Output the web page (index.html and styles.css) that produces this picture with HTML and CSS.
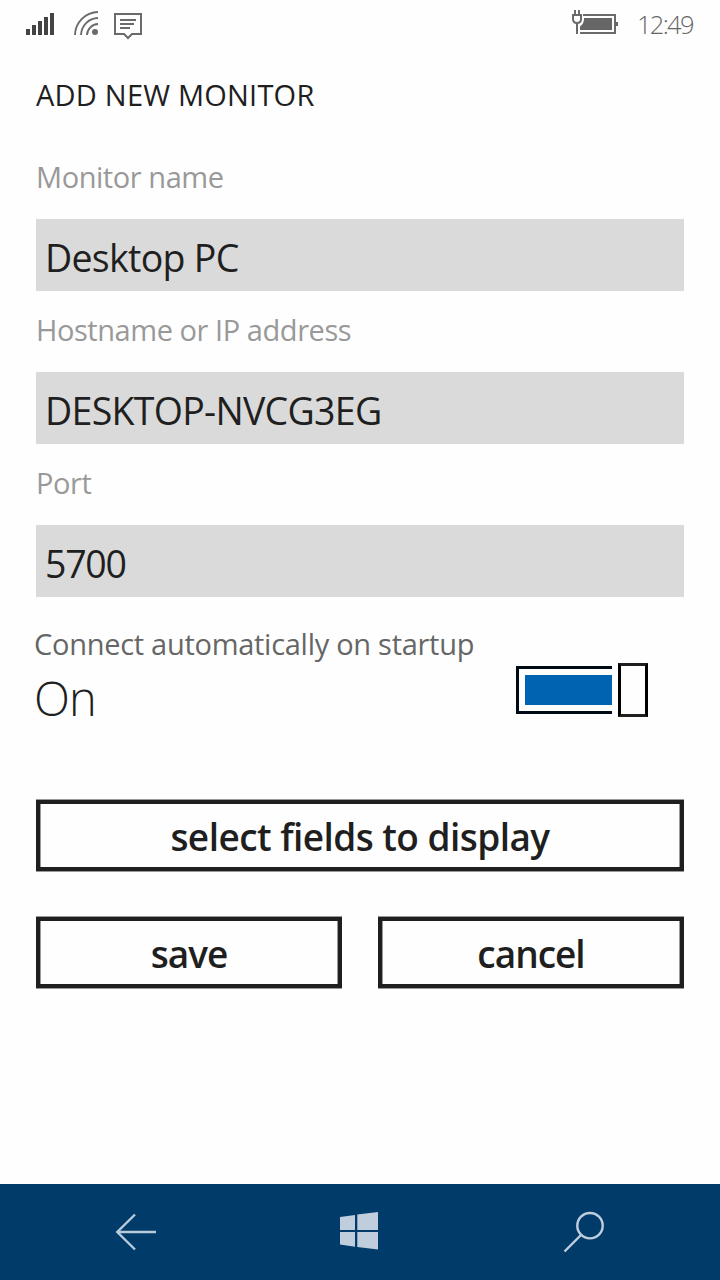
FILE: index.html
```html
<!DOCTYPE html>
<html lang="en">
<head>
    <meta charset="UTF-8">
    <meta name="viewport" content="width=device-width, initial-scale=1.0">
    <title>Add new monitor</title>
    <link rel="stylesheet" href="styles.css">
</head>
<body>
    <div class="phone">
        <div class="status-bar">
            <svg class="status-left" width="160" height="48" viewBox="0 0 160 48">
                <g fill="#444">
                    <rect x="26" y="29" width="4" height="6"/>
                    <rect x="32" y="25" width="4" height="10"/>
                    <rect x="38" y="21" width="4" height="14"/>
                    <rect x="44" y="17" width="4" height="18"/>
                    <rect x="50" y="13" width="4" height="22"/>
                </g>
                <g fill="none" stroke="#6a6a6a" stroke-width="1.9">
                    <path d="M75 35A23.5 23.5 0 0 1 98 12"/>
                    <path d="M81 35A17.5 17.5 0 0 1 98 18"/>
                    <path d="M87 35A11.5 11.5 0 0 1 98 24"/>
                </g>
                <circle cx="95" cy="32" r="3" fill="#6a6a6a"/>
                <path d="M115 14H141V34H132L128 38L124 34H115Z" fill="none" stroke="#6a6a6a" stroke-width="2"/>
                <path d="M120 20H136M120 24H134M120 28H130" stroke="#6a6a6a" stroke-width="2"/>
            </svg>
            <div class="status-right">
                <svg width="48" height="48" viewBox="0 0 48 48">
                    <path d="M13 15H45V33H10" fill="none" stroke="#6a6a6a" stroke-width="2"/>
                    <rect x="46" y="22" width="2" height="4" fill="#6a6a6a"/>
                    <path d="M14 18H42V30H10V26.5Q14 24 14 19Z" fill="#666"/>
                    <path d="M3 15H11V19Q11 23 7 23Q3 23 3 19Z" fill="#fff" stroke="#6a6a6a" stroke-width="2"/>
                    <path d="M5 10V14M9 10V14M7 23V34" stroke="#6a6a6a" stroke-width="2"/>
                </svg>
                <span class="clock">12:49</span>
            </div>
        </div>

        <form class="content">
            <h1>ADD NEW MONITOR</h1>
            <label for="name">Monitor name</label>
            <input type="text" id="name" value="Desktop PC">
            <label for="host">Hostname or IP address</label>
            <input type="text" id="host" value="DESKTOP-NVCG3EG">
            <label for="port">Port</label>
            <input type="text" id="port" class="port" value="5700">

            <div class="toggle-row">
                <div>
                    <div class="toggle-title">Connect automatically on startup</div>
                    <div class="toggle-state">On</div>
                </div>
                <div class="toggle">
                    <div class="track"><div class="fill"></div></div>
                    <div class="thumb"></div>
                </div>
            </div>

            <button type="button">select fields to display</button>
            <div class="actions">
                <button type="button">save</button>
                <button type="button">cancel</button>
            </div>
        </form>

        <div class="nav-bar">
            <svg width="48" height="48" viewBox="0 0 48 48" fill="none" stroke="#b9cbdb" stroke-width="2.4">
                <path d="M46 24H7M25 6.5L7.3 24L25 41.5"/>
            </svg>
            <svg width="48" height="48" viewBox="0 0 48 48" fill="#c0cddc">
                <path d="M5 9L20 7V22H5ZM22.3 6.6L43 4V22H22.3ZM5 24H20V38.8L5 36.5ZM22.3 24H43V41.5L22.3 39Z"/>
            </svg>
            <svg width="48" height="48" viewBox="0 0 48 48" fill="none" stroke="#c0cddc" stroke-width="2.4">
                <circle cx="30" cy="17.7" r="12.7"/>
                <path d="M21 27L4.5 43.5"/>
            </svg>
        </div>
    </div>
</body>
</html>
```

FILE: styles.css
```css
* {
    box-sizing: border-box;
}
body {
    margin: 0;
    background-color: #fefefe;
    font-family: "Segoe UI", "Open Sans", sans-serif;
    color: #1f1f1f;
}
.phone {
    display: flex;
    flex-direction: column;
    height: 1280px;
    width: 720px;
}
.status-bar {
    display: flex;
    justify-content: space-between;
    height: 48px;
    padding-right: 25px;
}
.status-right {
    display: flex;
}
.clock {
    width: 58px;
    margin-left: 19px;
    font-size: 25.5px;
    font-weight: 300;
    line-height: 48px;
    letter-spacing: -1.7px;
    white-space: nowrap;
    color: #666;
}
.content {
    display: flex;
    flex-direction: column;
    flex: 1;
    padding: 27px 36px 0;
}
h1 {
    margin: 0 0 42px;
    font-size: 29px;
    font-weight: 400;
    line-height: 40px;
    letter-spacing: 0.22px;
}
label {
    height: 40px;
    margin-bottom: 22px;
    font-size: 29px;
    line-height: 40px;
    letter-spacing: -0.44px;
    color: #999;
}
input {
    height: 72px;
    margin-bottom: 19px;
    padding: 4px 9px 0;
    border: none;
    border-radius: 0;
    background-color: #dadada;
    font-family: inherit;
    font-size: 37.5px;
    letter-spacing: -0.7px;
    color: #1f1f1f;
    outline: none;
}
.port {
    letter-spacing: -1.3px;
}
.toggle-row {
    display: flex;
    justify-content: space-between;
    height: 110px;
    margin: 8px 36px 66px -2px;
}
.toggle-title {
    font-size: 29px;
    line-height: 40px;
    letter-spacing: -0.28px;
    white-space: nowrap;
    color: #666;
}
.toggle-state {
    font-size: 47px;
    font-weight: 300;
    line-height: 69px;
    letter-spacing: -1px;
}
.toggle {
    display: flex;
    align-items: center;
    gap: 6px;
    height: 54px;
    margin-top: 39px;
}
.track {
    width: 96px;
    height: 48px;
    padding: 6px 0 6px 6px;
    border: 3px solid #000a14;
    border-right: none;
}
.fill {
    height: 30px;
    background-color: #0063b1;
}
.thumb {
    width: 30px;
    height: 54px;
    border: 3px solid #000;
    border-color: #1f1f1f #000;
}
button {
    height: 71px;
    padding: 1px 0 0;
    border: 4px solid #1f1f1f;
    box-shadow: 0 -1px #999, 0 1px #999, inset 1px 0 #999, inset -1px 0 #999;
    background-color: transparent;
    font-family: inherit;
    font-size: 37px;
    font-weight: 600;
    letter-spacing: -0.55px;
    color: #1f1f1f;
}
.actions {
    display: flex;
    gap: 36px;
    margin-top: 46px;
}
.actions button {
    flex: 1;
    letter-spacing: -1px;
}
.nav-bar {
    display: flex;
    justify-content: space-between;
    align-items: center;
    height: 96px;
    padding: 0 112px 0 110px;
    background-color: #003b69;
}
```
